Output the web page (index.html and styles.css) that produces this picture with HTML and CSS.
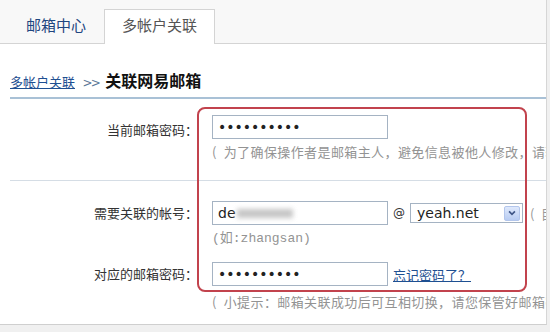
FILE: index.html
```html
<!DOCTYPE html>
<html>
    <head>
        <meta charset="utf-8">
        <title>多帐户关联</title>
        <link rel="stylesheet" href="styles.css">
    </head>
    <body>
        <div class="page">
            <div class="tabs">
                <a class="tab">邮箱中心</a>
                <a class="tab tab-active">多帐户关联</a>
            </div>

            <div class="crumb">
                <a href="#" class="crumb-link">多帐户关联</a>
                <span class="crumb-sep">&gt;&gt;</span>
                <span class="crumb-title">关联网易邮箱</span>
            </div>

            <div class="form">
                <!-- current password -->
                <div class="row row-first">
                    <label class="label">当前邮箱密码：</label>
                    <div class="field">
                        <div class="line">
                            <input class="text-input" type="password" value="1234567890">
                        </div>
                        <div class="hint">(&ensp;为了确保操作者是邮箱主人，避免信息被他人修改，请输入当前邮箱密码 )</div>
                    </div>
                </div>

                <!-- account to link -->
                <div class="row row-second">
                    <label class="label">需要关联的帐号：</label>
                    <div class="field">
                        <div class="line">
                            <div class="text-input account">de<span class="blur"></span></div>
                            <span class="at">@</span>
                            <div class="select">
                                <span>yeah.net</span>
                                <span class="select-btn">
                                    <svg viewBox="0 0 12 12" width="10" height="10">
                                        <path d="M2.5 4 L6 7.5 L9.5 4" fill="none" stroke="#3f5687" stroke-width="2"/>
                                    </svg>
                                </span>
                            </div>
                            <span class="after">(&ensp;目前仅支持网易邮箱 )</span>
                        </div>
                        <div class="hint hint-mono">(如:zhangsan)</div>
                    </div>
                </div>

                <!-- password of that account -->
                <div class="row row-third">
                    <label class="label">对应的邮箱密码：</label>
                    <div class="field">
                        <div class="line">
                            <input class="text-input" type="password" value="1234567890">
                            <a href="#" class="forgot">忘记密码了？</a>
                        </div>
                        <div class="hint hint-last">(&ensp;小提示：邮箱关联成功后可互相切换，请您保管好邮箱密码 )</div>
                    </div>
                </div>
            </div>

            <div class="highlight"></div>
        </div>
    </body>
</html>
```

FILE: styles.css
```css
body {
    margin: 0;
    background: #f0f0f0;
    font-family: "Noto Sans CJK SC", "DejaVu Sans", sans-serif;
    color: #333;
}

.page {
    position: relative;
    width: 546px;
    height: 324px;
    background: #fff;
    border-right: 1px solid #d6d6d6;
    border-bottom: 1px solid #cfcfcf;
    overflow: hidden;
}

/* tabs */
.tabs {
    display: flex;
    align-items: flex-end;
    height: 43px;
    padding-left: 10px;
    background: #f8f8f8;
    border-bottom: 1px solid #d4d4d4;
}

.tab {
    display: block;
    width: 90px;
    height: 30px;
    line-height: 30px;
    padding-bottom: 4px;
    margin-bottom: -1px;
    font-size: 15px;
    color: #1f4680;
    text-align: center;
    border: 1px solid transparent;
    border-bottom: none;
}

.tab-active {
    width: 109px;
    margin-left: 2px;
    background: #fff;
    border-color: #d4d4d4;
    color: #555;
}

/* breadcrumb */
.crumb {
    margin: 26px 0 0 10px;
    height: 20px;
    line-height: 20px;
    padding-bottom: 7px;
    border-bottom: 2px solid #a9c1d6;
    white-space: nowrap;
}

.crumb-link {
    font-size: 13px;
    color: #1e4f91;
    text-decoration: underline;
}

.crumb-sep {
    margin: 0 3px 0 4px;
    font-family: "DejaVu Sans", sans-serif;
    font-size: 12px;
    letter-spacing: -2px;
    color: #5c7898;
}

.crumb-title {
    font-size: 16px;
    font-weight: bold;
    color: #111;
}

/* form */
.form {
    margin-left: 10px;
}

.row {
    display: grid;
    grid-template-columns: 188px minmax(0, 1fr);
    column-gap: 14px;
}

.row-first {
    padding: 16px 0 21px;
    border-bottom: 1px solid #d5dde5;
}

.row-second {
    padding-top: 20px;
}

.row-third {
    padding-top: 16px;
}

.label {
    font-size: 13px;
    line-height: 24px;
    text-align: right;
    white-space: nowrap;
    color: #333;
}

.row-first .label {
    padding-top: 3px;
}

.line {
    display: flex;
    align-items: center;
    height: 24px;
    white-space: nowrap;
}

.text-input {
    box-sizing: border-box;
    width: 176px;
    height: 24px;
    margin: 0;
    padding: 0 5px;
    border: 1px solid #a5b3c3;
    background: #fff;
    font-family: "DejaVu Sans", sans-serif;
    font-size: 14px;
    color: #222;
    outline: none;
}

.account {
    display: flex;
    align-items: center;
    flex-shrink: 0;
}

.blur {
    display: inline-block;
    width: 56px;
    height: 9px;
    margin-left: 1px;
    background: #c6c6c6;
    filter: blur(2.5px);
}

.at {
    margin: 0 5px;
    font-family: "DejaVu Sans", sans-serif;
    font-size: 12px;
    color: #333;
}

.select {
    box-sizing: border-box;
    display: flex;
    align-items: center;
    justify-content: space-between;
    flex-shrink: 0;
    width: 113px;
    height: 20px;
    padding: 0 2px 0 6px;
    border: 1px solid #a5b3c3;
    font-family: "DejaVu Sans", sans-serif;
    font-size: 14px;
    color: #222;
}

.select-btn {
    box-sizing: border-box;
    display: flex;
    align-items: center;
    justify-content: center;
    width: 16px;
    height: 15px;
    background: linear-gradient(#dfe9fc, #b8ccf2);
    border: 1px solid #b3c6ec;
    border-radius: 2px;
}

.after {
    margin-left: 7px;
    font-size: 13px;
    color: #999;
}

.forgot {
    margin-left: 5px;
    font-size: 13px;
    color: #1e4f91;
    text-decoration: underline;
}

.hint {
    margin-top: 6px;
    font-size: 13px;
    line-height: 14px;
    letter-spacing: 0.4px;
    color: #939393;
    white-space: nowrap;
}

.hint-mono {
    margin-top: 7px;
    font-family: "Liberation Mono", "Noto Sans CJK SC", monospace;
    letter-spacing: 0;
}

.hint-last {
    margin-top: 9px;
}

/* red annotation frame */
.highlight {
    position: absolute;
    left: 197px;
    top: 107px;
    box-sizing: border-box;
    width: 330px;
    height: 185px;
    border: 2px solid #c2434d;
    border-radius: 8px;
    pointer-events: none;
}
```
